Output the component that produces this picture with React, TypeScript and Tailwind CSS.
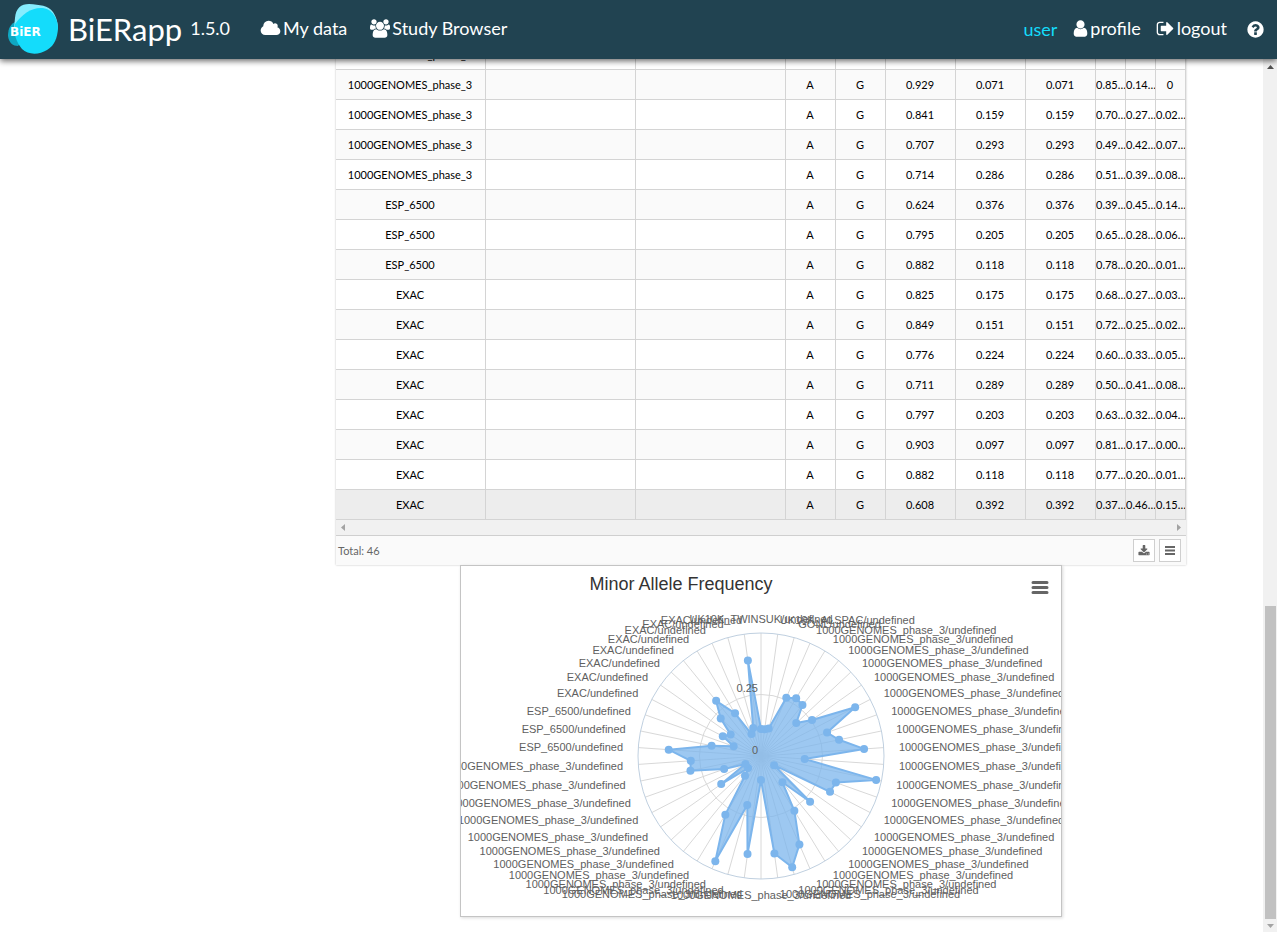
import type { ReactNode } from "react";
import { clsx } from "clsx";

type Row = [study: string, maf: string, homRef: string, het: string, homAlt: string, ref: string];

const ROWS: Row[] = [
  ["1000GENOMES_phase_3", "0.198", "0.64…", "0.31…", "0.04…", "0.802"],
  ["1000GENOMES_phase_3", "0.071", "0.85…", "0.14…", "0", "0.929"],
  ["1000GENOMES_phase_3", "0.159", "0.70…", "0.27…", "0.02…", "0.841"],
  ["1000GENOMES_phase_3", "0.293", "0.49…", "0.42…", "0.07…", "0.707"],
  ["1000GENOMES_phase_3", "0.286", "0.51…", "0.39…", "0.08…", "0.714"],
  ["ESP_6500", "0.376", "0.39…", "0.45…", "0.14…", "0.624"],
  ["ESP_6500", "0.205", "0.65…", "0.28…", "0.06…", "0.795"],
  ["ESP_6500", "0.118", "0.78…", "0.20…", "0.01…", "0.882"],
  ["EXAC", "0.175", "0.68…", "0.27…", "0.03…", "0.825"],
  ["EXAC", "0.151", "0.72…", "0.25…", "0.02…", "0.849"],
  ["EXAC", "0.224", "0.60…", "0.33…", "0.05…", "0.776"],
  ["EXAC", "0.289", "0.50…", "0.41…", "0.08…", "0.711"],
  ["EXAC", "0.203", "0.63…", "0.32…", "0.04…", "0.797"],
  ["EXAC", "0.097", "0.81…", "0.17…", "0.00…", "0.903"],
  ["EXAC", "0.118", "0.77…", "0.20…", "0.01…", "0.882"],
  ["EXAC", "0.392", "0.37…", "0.46…", "0.15…", "0.608"],
];

const COLUMNS = [
  "w-[150px]", "w-[150px]", "w-[150px]", "w-[50px]", "w-[50px]",
  "w-[70px]", "w-[70px]", "w-[70px]", "w-[30px]", "w-[30px]", "w-[30px]",
];

const MAF = [
  0.11, 0.11, 0.116, 0.258, 0.275, 0.267, 0.196, 0.254, 0.431, 0.285, 0.324, 0.42,
  0.178, 0.478, 0.323, 0.316, 0.065, 0.273, 0.138, 0.261, 0.392, 0.47, 0.4, 0.098,
  0.402, 0.207, 0.466, 0.279, 0.103, 0.072, 0.198, 0.071, 0.159, 0.293, 0.286, 0.376,
  0.205, 0.118, 0.175, 0.151, 0.224, 0.289, 0.203, 0.097, 0.118, 0.392,
];

function studyName(i: number) {
  if (i === 0) return "UK10K_TWINSUK";
  if (i === 1) return "UK10K_ALSPAC";
  if (i === 2) return "GONL";
  if (i < 35) return "1000GENOMES_phase_3";
  if (i < 38) return "ESP_6500";
  return "EXAC";
}

const CX = 300;
const CY = 190;
const RADIUS = 123;
const LABEL_RADIUS = 138.2;

function polar(i: number, r: number) {
  const a = (i / MAF.length) * Math.PI * 2;
  return { x: CX + r * Math.sin(a), y: CY - r * Math.cos(a) };
}

// Font Awesome 4 glyphs
const ICONS = {
  cloud: {
    w: 2048,
    d: "M1984 1152q0 159-112.5 271.5t-271.5 112.5h-1088q-185 0-316.5-131.5t-131.5-316.5q0-132 71-241.5t187-163.5q-2-28-2-43 0-212 150-362t362-150q158 0 286.5 88t187.5 230q70-62 166-62 106 0 181 75t75 181q0 75-41 138 129 30 213 134.5t84 239.5z",
  },
  users: {
    w: 1920,
    d: "M593 896q-162 5-265 128h-134q-82 0-138-40.5t-56-118.5q0-353 124-353 6 0 43.5 21t97.5 42.5 119 21.5q67 0 133-23-5 37-5 66 0 159 93 256zm1071 637q0 120-73 189.5t-194 69.5h-874q-121 0-194-69.5t-73-189.5q0-53 3.5-103.5t14-109 26.5-108.5 43-97.5 62-81 85.5-53.5 111.5-20q10 0 43 21.5t73 48 107 48 135 21.5 135-21.5 107-48 73-48 43-21.5q61 0 111.5 20t85.5 53.5 62 81 43 97.5 26.5 108.5 14 109 3.5 103.5zm-1024-1277q0 106-75 181t-181 75-181-75-75-181 75-181 181-75 181 75 75 181zm704 384q0 159-112.5 271.5t-271.5 112.5-271.5-112.5-112.5-271.5 112.5-271.5 271.5-112.5 271.5 112.5 112.5 271.5zm576 225q0 78-56 118.5t-138 40.5h-134q-103-123-265-128 93-97 93-256 0-29-5-66 66 23 133 23 59 0 119-21.5t97.5-42.5 43.5-21q124 0 124 353zm-128-609q0 106-75 181t-181 75-181-75-75-181 75-181 181-75 181 75 75 181z",
  },
  user: {
    w: 1792,
    d: "M1536 1399q0 109-62.5 187t-150.5 78h-854q-88 0-150.5-78t-62.5-187q0-85 8.5-160.5t31.5-152 58.5-131 94-89 134.5-34.5q131 128 313 128t313-128q76 0 134.5 34.5t94 89 58.5 131 31.5 152 8.5 160.5zm-256-887q0 159-112.5 271.5t-271.5 112.5-271.5-112.5-112.5-271.5 112.5-271.5 271.5-112.5 271.5 112.5 112.5 271.5z",
  },
  signOut: {
    w: 1792,
    d: "M704 1440q0 4 1 20t.5 26.5-3 23.5-10 19.5-20.5 6.5h-320q-119 0-203.5-84.5t-84.5-203.5v-704q0-119 84.5-203.5t203.5-84.5h320q13 0 22.5 9.5t9.5 22.5q0 4 1 20t.5 26.5-3 23.5-10 19.5-20.5 6.5h-320q-66 0-113 47t-47 113v704q0 66 47 113t113 47h312l11.5 1 11.5 3 8 5.5 7 9 2 13.5zm928-544q0 26-19 45l-544 544q-19 19-45 19t-45-19-19-45v-288h-448q-26 0-45-19t-19-45v-384q0-26 19-45t45-19h448v-288q0-26 19-45t45-19 45 19l544 544q19 19 19 45z",
  },
  question: {
    w: 1792,
    d: "M1024 1376v-192q0-14-9-23t-23-9h-192q-14 0-23 9t-9 23v192q0 14 9 23t23 9h192q14 0 23-9t9-23zm256-672q0-88-55.5-163t-138.5-116-170-41q-243 0-371 213-15 24 8 42l132 100q7 6 19 6 16 0 25-12 53-68 86-92 34-24 86-24 48 0 85.5 26t37.5 59q0 38-20 61t-68 45q-63 28-115.5 86.5t-52.5 125.5v36q0 14 9 23t23 9h192q14 0 23-9t9-23q0-19 21.5-49.5t54.5-49.5q32-18 49-28.5t46-35 44.5-48 28-60.5 12.5-81zm384 192q0 209-103 385.5t-279.5 279.5-385.5 103-385.5-103-279.5-279.5-103-385.5 103-385.5 279.5-279.5 385.5-103 385.5 103 279.5 279.5 103 385.5z",
  },
  download: {
    w: 1792,
    d: "M1344 1344q0-26-19-45t-45-19-45 19-19 45 19 45 45 19 45-19 19-45zm256 0q0-26-19-45t-45-19-45 19-19 45 19 45 45 19 45-19 19-45zm128-224v320q0 40-28 68t-68 28h-1472q-40 0-68-28t-28-68v-320q0-40 28-68t68-28h465l135 136q58 56 136 56t136-56l136-136h464q40 0 68 28t28 68zm-325-569q17 41-14 70l-448 448q-18 19-45 19t-45-19l-448-448q-31-29-14-70 17-39 59-39h256v-448q0-26 19-45t45-19h256q26 0 45 19t19 45v448h256q42 0 59 39z",
  },
};

function Icon({ name, className }: { name: keyof typeof ICONS; className: string }) {
  const icon = ICONS[name];
  return (
    <svg viewBox={`0 0 ${icon.w} 1792`} fill="currentColor" aria-hidden="true" className={className}>
      <path d={icon.d} />
    </svg>
  );
}

function Logo() {
  return (
    <svg viewBox="0 0 50 50" className="h-[50px] w-[50px]" role="img" aria-label="BiER">
      <path d="M7 18C1 21 0 27 0 32C1 39 5 42 10 42L20 30Z" fill="#0fa7c2" />
      <path d="M7 14C8 4 13 0 21 0C32 1 40 1 45 8C49 14 50 20 50 25L20 34L6 24Z" fill="#86ecfd" />
      <path d="M7 20C14 10 24 3 35 4C46 6 50 16 50 25C49 34 47 41 39 46C31 51 20 51 14 45C9 39 5 30 7 20Z" fill="#14dcfb" />
      <text x="2" y="32" fill="#fff" fontSize="12" fontWeight="bold" fontFamily="DejaVu Sans, sans-serif">
        BiER
      </text>
    </svg>
  );
}

function NavLink({ icon, className, children }: { icon: ReactNode; className?: string; children: ReactNode }) {
  return (
    <a href="#" className={clsx("flex items-center", className)}>
      {icon}
      <span className="pb-[2px]">{children}</span>
    </a>
  );
}

function Header() {
  return (
    <header className="relative z-10 flex h-[59px] items-center bg-[#214351] pb-[2px] pl-2 pr-3 text-lg leading-6 text-white shadow-[0_2px_6px_rgba(0,0,0,0.6)]">
      <Logo />
      <span className="ml-[10px] text-[31px] leading-9">BiERapp</span>
      <span className="ml-2 pb-[2px]">1.5.0</span>
      <nav className="ml-[30px] flex gap-[23px]">
        <NavLink className="gap-[2px]" icon={<Icon name="cloud" className="h-[19px] w-[21px]" />}>My data</NavLink>
        <NavLink className="gap-[2px]" icon={<Icon name="users" className="h-[19px] w-5" />}>Study Browser</NavLink>
      </nav>
      <nav className="ml-auto flex items-center">
        <span className="mr-[14px] text-[#14dcfb]">user</span>
        <NavLink className="mr-[15px]" icon={<Icon name="user" className="h-[19px] w-[19px]" />}>profile</NavLink>
        <NavLink className="gap-[2px]" icon={<Icon name="signOut" className="h-[19px] w-[19px]" />}>logout</NavLink>
        <button type="button" aria-label="Help" className="ml-[19px] pt-[2px]">
          <Icon name="question" className="h-[19px] w-[19px]" />
        </button>
      </nav>
    </header>
  );
}

function FrequencyTable() {
  return (
    <section className="w-[850px] shadow-[0_0_2px_rgba(0,0,0,0.25)]">
      <table className="w-full table-fixed border-separate border-spacing-0 text-center text-[11px] leading-[14px] text-black">
        <colgroup>
          {COLUMNS.map((w, i) => (
            <col key={i} className={w} />
          ))}
        </colgroup>
        <tbody>
          {ROWS.map(([study, maf, homRef, het, homAlt, ref], i) => {
            const hovered = i === ROWS.length - 1;
            return (
              <tr key={i} className={hovered ? "bg-[#ededed]" : i % 2 ? "bg-[#fafafa]" : "bg-white"}>
                {[study, "", "", "A", "G", ref, maf, maf, homRef, het, homAlt].map((cell, c) => (
                  <td key={c} className="h-[30px] overflow-hidden whitespace-nowrap border-b border-r border-[#d4d4d4] p-0 pr-px">
                    {cell}
                  </td>
                ))}
              </tr>
            );
          })}
        </tbody>
      </table>
      <div className="flex h-[15px] items-center justify-between bg-[#f1f1f1] px-[5px] text-[#a3a3a3]">
        <svg viewBox="0 0 4 7" className="h-[7px] w-1" fill="currentColor"><path d="M4 0V7L0 3.5Z" /></svg>
        <svg viewBox="0 0 4 7" className="h-[7px] w-1" fill="currentColor"><path d="M0 0V7L4 3.5Z" /></svg>
      </div>
      <footer className="flex h-[30px] items-center border-t border-[#cfcfcf] bg-[#fafafa] pl-[2px] pr-[5px] text-[11px] text-[#666]">
        <span className="pt-[2px]">Total: 46</span>
        <button type="button" aria-label="Download" className="ml-auto flex h-[23px] w-[22px] items-center justify-center border border-[#cfcfcf] bg-white">
          <Icon name="download" className="h-3 w-3" />
        </button>
        <button type="button" aria-label="Columns" className="ml-1 flex h-[23px] w-[22px] items-center justify-center border border-[#cfcfcf] bg-white">
          <svg viewBox="0 0 10 9" className="h-[9px] w-[10px]" stroke="currentColor" strokeWidth="2">
            <path d="M0 1H10M0 4.5H10M0 8H10" />
          </svg>
        </button>
      </footer>
    </section>
  );
}

function FrequencyChart() {
  const points = MAF.map((v, i) => polar(i, v * RADIUS * 2));
  const outline = points.map((p) => `${p.x.toFixed(1)},${p.y.toFixed(1)}`).join(" ");

  return (
    <section className="relative w-[602px] border border-[#c4c4c4] bg-white font-['Liberation_Sans',Arial,sans-serif] shadow-[1px_1px_3px_rgba(0,0,0,0.15)]">
      <svg viewBox="0 0 600 350" className="block w-full overflow-hidden" role="img" aria-label="Minor Allele Frequency">
        <text x="220" y="24" textAnchor="middle" fontSize="18" fill="#333">
          Minor Allele Frequency
        </text>
        <g stroke="#d8d8d8" fill="none">
          {MAF.map((_, i) => {
            const end = polar(i, RADIUS);
            return <line key={i} x1={CX} y1={CY} x2={end.x} y2={end.y} />;
          })}
          <circle cx={CX} cy={CY} r={RADIUS / 2} />
        </g>
        <circle cx={CX} cy={CY} r={RADIUS} fill="none" stroke="#c0d0e0" />
        <polygon points={outline} fill="#7cb5ec" fillOpacity="0.75" />
        <polygon points={outline} fill="none" stroke="#7cb5ec" strokeWidth="2" strokeLinejoin="round" />
        {points.map((p, i) => (
          <circle key={i} cx={p.x} cy={p.y} r="4" fill="#7cb5ec" />
        ))}
        <g fontSize="11" fill="#606060">
          {MAF.map((_, i) => {
            const p = polar(i, LABEL_RADIUS);
            const anchor = i % 23 === 0 ? "middle" : i < 23 ? "start" : "end";
            return (
              <text key={i} x={p.x} y={Math.round(p.y + 4.9)} textAnchor={anchor}>
                {studyName(i)}/undefined
              </text>
            );
          })}
          <text x="297" y="188" textAnchor="end">0</text>
          <text x="297" y="126" textAnchor="end">0.25</text>
        </g>
      </svg>
      <button type="button" aria-label="Chart menu" className="absolute right-3 top-[14px] text-[#666]">
        <svg viewBox="0 0 18 15" className="h-[15px] w-[18px]" stroke="currentColor" strokeWidth="3" strokeLinecap="round">
          <path d="M2 2.5H16M2 7.5H16M2 12.5H16" />
        </svg>
      </button>
    </section>
  );
}

function PageScrollbar() {
  return (
    <div className="flex w-[14px] flex-col items-center bg-[#f1f1f1] pb-1 pt-[6px]">
      <svg viewBox="0 0 7 4" className="h-1 w-[7px]" fill="#505050"><path d="M0 4H7L3.5 0Z" /></svg>
      <div className="flex-1" />
      <div className="h-[313px] w-[11px] bg-[#c1c1c1]" />
      <svg viewBox="0 0 7 4" className="mt-[5px] h-1 w-[7px]" fill="#a3a3a3"><path d="M0 0H7L3.5 4Z" /></svg>
    </div>
  );
}

export default function App() {
  return (
    <div className="flex h-screen flex-col overflow-hidden bg-white font-[Lato,sans-serif]">
      <Header />
      <div className="flex min-h-0 flex-1">
        <main className="-mt-[19px] flex flex-1 flex-col items-center pl-[259px]">
          <FrequencyTable />
          <FrequencyChart />
        </main>
        <PageScrollbar />
      </div>
    </div>
  );
}
